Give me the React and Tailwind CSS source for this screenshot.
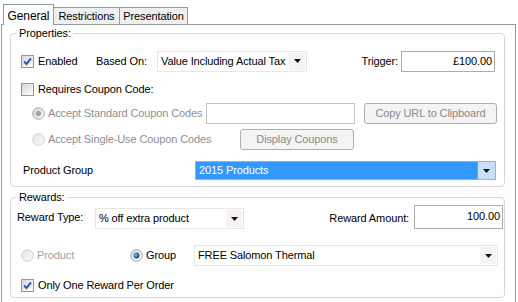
import React from "react";

const font = { fontFamily: '"Liberation Sans", Arial, sans-serif' };

function Check({ checked }) {
  return (
    <span className="flex h-[13px] w-[13px] shrink-0 items-center justify-center border border-[#8e9aa6] bg-gradient-to-br from-[#d6d6d6] to-white">
      {checked && (
        <svg width="9" height="9" viewBox="0 0 9 9">
          <path d="M1 4.5 L3.5 7 L8 1.5" fill="none" stroke="#2a5db0" strokeWidth="2" />
        </svg>
      )}
    </span>
  );
}

function Radio({ state }) {
  // state: "off" | "offDisabled" | "onDisabled" | "on"
  return (
    <svg width="13" height="13" viewBox="0 0 13 13" className="shrink-0">
      <defs>
        <linearGradient id={"rg-" + state} x1="0" y1="0" x2="1" y2="1">
          <stop offset="0" stopColor={state === "offDisabled" ? "#e4e4e4" : "#d4d4d4"} />
          <stop offset="1" stopColor="#fbfbfb" />
        </linearGradient>
        <radialGradient id="dot-on" cx="0.4" cy="0.4" r="0.6">
          <stop offset="0" stopColor="#9cc8f2" />
          <stop offset="0.6" stopColor="#2e6cc0" />
          <stop offset="1" stopColor="#1c3f7a" />
        </radialGradient>
      </defs>
      <circle cx="6.5" cy="6.5" r="5.8" fill={"url(#rg-" + state + ")"} stroke={state === "offDisabled" ? "#cfcfcf" : "#a9a9a9"} />
      {state === "onDisabled" && <circle cx="6.5" cy="6.5" r="2.6" fill="#a3a3a3" />}
      {state === "on" && <circle cx="6.5" cy="6.5" r="2.9" fill="url(#dot-on)" />}
    </svg>
  );
}

function Arrow({ className = "" }) {
  return (
    <svg width="7" height="4" viewBox="0 0 7 4" className={className}>
      <path d="M0 0 H7 L3.5 4 Z" fill="#111" />
    </svg>
  );
}

function Combo({ text, className = "" }) {
  return (
    <div className={"flex items-stretch border border-[#e6e6e6] bg-white " + className}>
      <span className="flex-1 overflow-hidden whitespace-nowrap pl-[3px] leading-[19px]">{text}</span>
      <span className="my-[1px] mr-[1px] flex w-[16px] shrink-0 items-center justify-center bg-[#f6f2f6]">
        <Arrow />
      </span>
    </div>
  );
}

function Input({ value, className = "" }) {
  return (
    <div className={"border border-[#acacac] bg-white pr-[2px] text-right leading-[19px] " + className}>{value}</div>
  );
}

function Btn({ children, className = "" }) {
  return (
    <div className={"flex items-center justify-center rounded-[3px] border border-[#aeaeae] bg-[#f4f4f4] text-[#8a8a8a] " + className}>
      {children}
    </div>
  );
}

function Group({ title, className = "", children }) {
  return (
    <fieldset className={"rounded-[4px] border border-[#d5d9dd] " + className}>
      <legend className="ml-[6px] px-[2px] leading-[13px]">{title}</legend>
      {children}
    </fieldset>
  );
}

export default function App() {
  return (
    <div className="h-[302px] w-[518px] overflow-hidden bg-white text-[11px] tracking-[-0.12px] text-black" style={font}>
      {/* tabs */}
      <div className="flex h-[24px] items-end pl-[3px]">
        <div className="relative z-10 -mb-px flex h-[21px] w-[51px] items-start justify-center border border-b-0 border-[#919b9c] bg-white pt-[2px] text-[12px]">
          General
        </div>
        <div className="flex h-[17px] w-[66px] items-center justify-center border border-b-0 border-l-0 border-[#919b9c] bg-[#efefef]">
          Restrictions
        </div>
        <div className="flex h-[17px] w-[68px] items-center justify-center border border-b-0 border-l-0 border-[#919b9c] bg-[#efefef]">
          Presentation
        </div>
      </div>

      {/* panel */}
      <div className="ml-[1px] h-[290px] w-[515px] border border-[#919b9c] pl-[8px] pr-[10px] pt-[2px]">
        <Group title="Properties:">
          <div className="flex flex-col pb-[6px] pl-[10px] pr-[7px] pt-[10px]">
            <div className="flex h-[22px] items-center">
              <div className="flex w-[75px] items-center gap-[4px]">
                <Check checked />
                <span>Enabled</span>
              </div>
              <span className="w-[61px]">Based On:</span>
              <Combo text="Value Including Actual Tax" className="h-[21px] w-[150px]" />
              <div className="ml-auto mr-[2px] flex items-center gap-[3px]">
                <span>Trigger:</span>
                <Input value="£100.00" className="h-[21px] w-[94px]" />
              </div>
            </div>

            <div className="mt-[8px] flex h-[19px] items-center gap-[4px]">
              <Check />
              <span>Requires Coupon Code:</span>
            </div>

            <div className="mt-[4px] flex h-[21px] items-center">
              <div className="flex w-[185px] items-center gap-[3px] pl-[11px] text-[#8e8f8f]">
                <Radio state="onDisabled" />
                <span className="whitespace-nowrap">Accept Standard Coupon Codes</span>
              </div>
              <div className="h-[21px] w-[149px] border border-[#c4c4c4] bg-white" />
              <Btn className="ml-auto h-[21px] w-[133px]">Copy URL to Clipboard</Btn>
            </div>

            <div className="mt-[5px] flex h-[21px] items-center">
              <div className="flex w-[219px] items-center gap-[3px] pl-[11px] text-[#8e8f8f]">
                <Radio state="offDisabled" />
                <span className="whitespace-nowrap">Accept Single-Use Coupon Codes</span>
              </div>
              <Btn className="h-[21px] w-[114px]">Display Coupons</Btn>
            </div>

            <div className="mt-[11px] flex h-[19px] items-center">
              <span className="w-[174px] pl-[2px]">Product Group</span>
              <div className="flex h-[19px] w-[301px] items-stretch border border-[#7db8f5] bg-[#3399ff] text-white">
                <span className="flex-1 pl-[3px] leading-[17px]">2015 Products</span>
                <span className="flex w-[18px] items-center justify-center border-l border-[#5aa6f3] bg-[#c9e0f8]">
                  <Arrow />
                </span>
              </div>
            </div>
          </div>
        </Group>

        <Group title="Rewards:" className="mt-[4px]">
          <div className="flex flex-col pb-[3px] pl-[6px] pr-[1px] pt-[1px]">
            <div className="flex h-[24px] items-center">
              <span className="w-[78px]">Reward Type:</span>
              <Combo text="% off extra product" className="mt-[3px] h-[21px] w-[149px]" />
              <div className="ml-auto flex items-center gap-[5px]">
                <span className="mt-[3px]">Reward Amount:</span>
                <Input value="100.00" className="h-[24px] w-[89px] leading-[20px]" />
              </div>
            </div>

            <div className="mt-[16px] flex h-[21px] items-center">
              <div className="flex w-[113px] items-center gap-[3px] pl-[4px] text-[#a3a3a3]">
                <Radio state="offDisabled" />
                <span>Product</span>
              </div>
              <div className="flex w-[64px] items-center gap-[3px]">
                <Radio state="on" />
                <span>Group</span>
              </div>
              <Combo text="FREE Salomon Thermal" className="h-[21px] w-[304px]" />
            </div>

            <div className="mt-[10px] flex h-[18px] items-center gap-[4px] pl-[4px]">
              <Check checked />
              <span>Only One Reward Per Order</span>
            </div>
          </div>
        </Group>
      </div>
    </div>
  );
}
